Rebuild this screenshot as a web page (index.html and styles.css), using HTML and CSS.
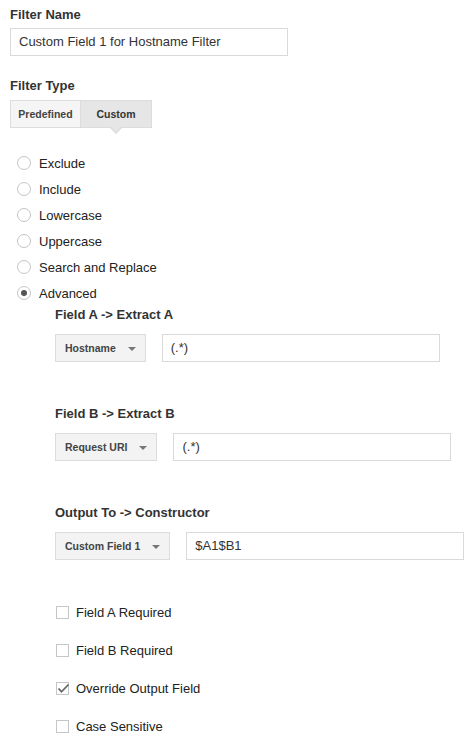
FILE: index.html
```html
<!DOCTYPE html>
<html>
<head>
<meta charset="utf-8">
<link rel="stylesheet" href="styles.css">
</head>
<body>
<div class="page">
  <div class="heading h-name">Filter Name</div>
  <div class="text-input name-input">Custom Field 1 for Hostname Filter</div>

  <div class="heading h-type">Filter Type</div>
  <div class="toggle">
    <div class="tbtn">Predefined</div>
    <div class="tbtn active">Custom<span class="pointer"></span></div>
  </div>

  <div class="radios">
    <div class="radio-row"><span class="radio"></span><span>Exclude</span></div>
    <div class="radio-row"><span class="radio"></span><span>Include</span></div>
    <div class="radio-row"><span class="radio"></span><span>Lowercase</span></div>
    <div class="radio-row"><span class="radio"></span><span>Uppercase</span></div>
    <div class="radio-row"><span class="radio"></span><span>Search and Replace</span></div>
    <div class="radio-row"><span class="radio checked"></span><span>Advanced</span></div>
  </div>

  <div class="advanced">
    <div class="heading first">Field A -&gt; Extract A</div>
    <div class="field-row">
      <div class="select"><span>Hostname</span><span class="arrow"></span></div>
      <div class="text-input field-input">(.*)</div>
    </div>

    <div class="heading sec">Field B -&gt; Extract B</div>
    <div class="field-row">
      <div class="select"><span>Request URI</span><span class="arrow"></span></div>
      <div class="text-input field-input">(.*)</div>
    </div>

    <div class="heading sec">Output To -&gt; Constructor</div>
    <div class="field-row">
      <div class="select"><span>Custom Field 1</span><span class="arrow"></span></div>
      <div class="text-input field-input">$A1$B1</div>
    </div>

    <div class="checks">
      <div class="check-row"><span class="check"></span><span>Field A Required</span></div>
      <div class="check-row"><span class="check"></span><span>Field B Required</span></div>
      <div class="check-row"><span class="check"><svg width="13" height="11" viewBox="0 0 13 11"><path d="M1.5 5.5 L4.5 8.8 L11.5 1.5" fill="none" stroke="#666" stroke-width="1.8"/></svg></span><span>Override Output Field</span></div>
      <div class="check-row"><span class="check"></span><span>Case Sensitive</span></div>
    </div>
  </div>
</div>
</body>
</html>
```

FILE: styles.css
```css
html, body {
  margin: 0;
  padding: 0;
  background: #fff;
}
body {
  font-family: "Liberation Sans", Arial, sans-serif;
  font-size: 13px;
  color: #222;
}
.page {
  padding: 7px 0 0 10px;
}
.heading {
  font-weight: bold;
  font-size: 13px;
  line-height: 16px;
  color: #333;
}
.h-type {
  margin-top: 22px;
}
.text-input {
  box-sizing: border-box;
  height: 28px;
  border: 1px solid #d9d9d9;
  background: #fff;
  color: #333;
  font-size: 13px;
  line-height: 26px;
  padding: 0 8px;
  white-space: nowrap;
}
.name-input {
  width: 278px;
  margin-top: 5px;
}
.toggle {
  display: flex;
  margin-top: 6px;
  width: max-content;
}
.tbtn {
  position: relative;
  box-sizing: border-box;
  width: 71px;
  height: 28px;
  border: 1px solid #dcdcdc;
  background: #f5f5f5;
  font-size: 10.5px;
  font-weight: bold;
  color: #444;
  line-height: 26px;
  text-align: center;
}
.tbtn + .tbtn {
  border-left: none;
  width: 71px;
}
.tbtn.active {
  background: #e6e6e6;
  color: #333;
}
.pointer {
  position: absolute;
  left: 50%;
  bottom: -7px;
  margin-left: -6px;
  width: 0;
  height: 0;
  border-left: 6px solid transparent;
  border-right: 6px solid transparent;
  border-top: 6px solid #dcdcdc;
}
.pointer::after {
  content: "";
  position: absolute;
  left: -5px;
  top: -7px;
  width: 0;
  height: 0;
  border-left: 5px solid transparent;
  border-right: 5px solid transparent;
  border-top: 5px solid #e6e6e6;
}
.radios {
  margin-top: 22px;
}
.radio-row {
  display: flex;
  align-items: center;
  height: 26px;
  gap: 8px;
  padding-left: 7px;
}
.radio {
  box-sizing: border-box;
  width: 14px;
  height: 14px;
  border: 1px solid #c4c4c4;
  border-radius: 50%;
  background: #fff;
  display: flex;
  align-items: center;
  justify-content: center;
}
.radio.checked::after {
  content: "";
  width: 6px;
  height: 6px;
  border-radius: 50%;
  background: #555;
}
.advanced {
  padding-left: 45px;
}
.heading.first {
  margin-top: 1px;
}
.field-row {
  display: flex;
  gap: 16px;
  margin-top: 11px;
}
.heading.sec {
  margin-top: 44px;
}
.select {
  box-sizing: border-box;
  height: 28px;
  border: 1px solid #dcdcdc;
  background: #f3f3f3;
  display: flex;
  align-items: center;
  gap: 12px;
  padding: 0 9px;
  font-size: 10.5px;
  font-weight: bold;
  color: #444;
  white-space: nowrap;
}
.arrow {
  width: 0;
  height: 0;
  border-left: 4px solid transparent;
  border-right: 4px solid transparent;
  border-top: 4px solid #777;
  margin-top: 2px;
}
.field-input {
  width: 278px;
}
.checks {
  margin-top: 44px;
}
.check-row {
  display: flex;
  align-items: center;
  height: 16px;
  gap: 7px;
  padding-left: 1px;
}
.check-row + .check-row {
  margin-top: 22px;
}
.check {
  box-sizing: border-box;
  width: 13px;
  height: 13px;
  border: 1px solid #c6c6c6;
  background: #fff;
  position: relative;
}
.check svg {
  position: absolute;
  left: 0;
  top: 0;
}
```
